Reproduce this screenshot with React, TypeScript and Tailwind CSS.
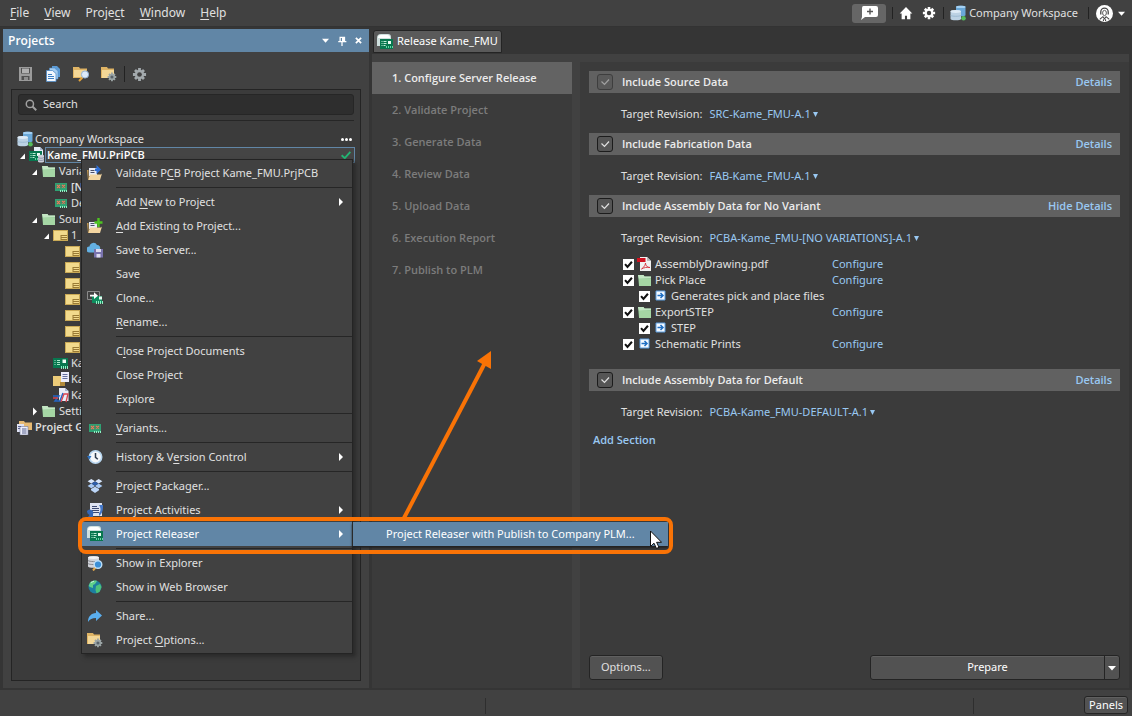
import React from "react";

const FONT = "font-['Noto_Sans','Open_Sans',sans-serif]";
const HEAVY = "font-['Open_Sans','Noto_Sans',sans-serif] font-semibold";

type IconProps = { className?: string };

/* ---------- icons ---------- */

function Svg({ className = "size-4", children }: { className?: string; children: React.ReactNode }) {
  return (
    <svg viewBox="0 0 16 16" className={`shrink-0 ${className}`} aria-hidden="true">
      {children}
    </svg>
  );
}

function CaretDown({ className = "size-2" }: IconProps) {
  return (
    <svg viewBox="0 0 8 8" className={`shrink-0 ${className}`} fill="currentColor" aria-hidden="true">
      <path d="M0 2h8L4 6.500z" />
    </svg>
  );
}

function GearPath({ fill, hole }: { fill: string; hole: string }) {
  return (
    <g>
      <g stroke={fill} strokeWidth="3">
        <path d="M8 1v14M1 8h14" />
        <path d="M3.200 3.200l9.600 9.600M12.800 3.200l-9.600 9.600" />
      </g>
      <circle cx="8" cy="8" r="5" fill={fill} />
      <circle cx="8" cy="8" r="2.500" fill={hole} />
    </g>
  );
}

function WorkspaceIcon({ className }: IconProps) {
  return (
    <Svg className={className}>
      <path d="M6 1.800C6 .4 15.500.4 15.500 1.800v8.400C15.500 11.500 6 11.500 6 10.200z" fill="#6aa8d8" />
      <ellipse cx="10.750" cy="1.900" rx="4.750" ry="1.200" fill="#a4d0f2" />
      <path d="M.5 6.500C.5 4.800 11 4.800 11 6.500V14C11 15.700.5 15.700.5 14z" fill="#bcd2e4" />
      <ellipse cx="5.750" cy="6.500" rx="5.250" ry="1.400" fill="#deebf6" />
      <path d="M.5 10.300c1 1.300 9.500 1.300 10.500 0" stroke="#93b3cc" strokeWidth=".8" fill="none" />
      <circle cx="13.500" cy="13.300" r="2.300" fill="#56bb5c" />
    </Svg>
  );
}

function BoardShape({ x = 0, y = 0 }: { x?: number; y?: number }) {
  return (
    <g transform={`translate(${x} ${y})`}>
      <path d="M0 0h13v10H0z" fill="#08774f" />
      <path d="M1.500 2.500h1M1.500 4.500h1M1.500 6.500h1M3.500 2.500h3M3.500 4.500h3M3.500 6.500h2" stroke="#bfeed8" strokeWidth="1" />
      <path d="M8 2h3v3H8z" fill="#e9fbf2" />
      <path d="M6.500 7v2M8.500 7v2M10.500 7v2M12.500 7v2" stroke="#5fd6a2" strokeWidth="1" />
    </g>
  );
}

function ReleaseIcon({ className }: IconProps) {
  return (
    <Svg className={className}>
      <path d="M0 12V4q0-4 4-4h7q3 0 3 3v2H4v7z" fill="#cfe0de" />
      <path d="M1 4q0-3 3-3h6q3 0 3 2.500V4z" fill="#fff" />
      <BoardShape x={3} y={5} />
    </Svg>
  );
}

function ProjectIcon() {
  return (
    <Svg>
      <path d="M5 0h6l3 3v8H5z" fill="#e8eef8" />
      <path d="M11 0v3h3" fill="#a9b9d4" />
      <BoardShape x={0} y={4} />
      <path d="M9 8.500C9 7.500 15 7.500 15 8.500v6c0 1.300-6 1.300-6 0z" fill="#cdd0da" />
      <path d="M9 10.500c1 1 5 1 6 0M9 12.700c1 1 5 1 6 0" stroke="#80889d" strokeWidth=".8" fill="none" />
    </Svg>
  );
}

function FolderIcon() {
  return (
    <Svg>
      <path d="M1 3h5.500l1 1.500H14V14H2z" fill="#8fc795" />
      <path d="M1 3h5.500l1 1.500H14V6L2 7z" fill="#c4e6c4" />
      <path d="M2 6.500h12V14H2z" fill="#a5d6a4" />
    </Svg>
  );
}

function VariantIcon() {
  return (
    <Svg>
      <path d="M2 4h12v8H2z" fill="#2fa173" />
      <path d="M3.500 5.500h4v4h-4zM8.500 5.500h4v3h-4z" fill="#4c7a5c" />
      <path d="M4 6l3 3m0-3L4 9M9 6l3 2.500m0-2.500L9 8.500" stroke="#e5805f" strokeWidth="1.100" />
      <path d="M7.500 11v2M9.500 11v2M11.500 11v2M13.500 11v2" stroke="#8ff0c4" strokeWidth="1" />
    </Svg>
  );
}

function SheetIcon() {
  return (
    <Svg>
      <path d="M0 3h15v11H0z" fill="#c9a956" />
      <path d="M1 4h13v9H1z" fill="#f2da8c" />
      <path d="M8 8.500h6M8 10.500h6M8 12.500h6M8 8v5" stroke="#9a7b35" strokeWidth="1" fill="none" />
    </Svg>
  );
}

function BoardIcon() {
  return (
    <Svg>
      <path d="M0 3h15v10H0z" fill="#08774f" />
      <path d="M1.500 5.500h1M1.500 7.500h1M1.500 9.500h1M4 5.500h3M4 7.500h3M4 9.500h3" stroke="#a9e8cb" />
      <path d="M9.500 4.500H13V8H9.500z" fill="#effcf5" />
      <path d="M8.500 11v3M10.500 11v3M12.500 11v3M14.500 11v3" stroke="#8ff0c4" strokeWidth="1" />
    </Svg>
  );
}

function SheetDocIcon() {
  return (
    <Svg>
      <path d="M0 5h11v10H0z" fill="#eccb78" />
      <path d="M7 11h5v4H7z" fill="#b08a3b" />
      <path d="M8 1h8v10H8z" fill="#eceefa" />
      <path d="M9.500 3.500h5M9.500 5.500h5M9.500 7.500h5" stroke="#66709c" />
    </Svg>
  );
}

function HarnessIcon() {
  return (
    <Svg>
      <path d="M6 1h6l3.500 3v10H6z" fill="#e8ecf7" />
      <path d="M12 1v3h3.500z" fill="#a9b5d0" />
      <path d="M0 9h6l-4 5h5l3-8" stroke="#2465c4" strokeWidth="1.500" fill="none" />
      <path d="M0 11h5M8 15l3-8h4l-2 8" stroke="#d94450" strokeWidth="1.300" fill="none" />
    </Svg>
  );
}

function ProjectGroupIcon() {
  return (
    <Svg>
      <path d="M2 2h5l1 1.500h7V11H2z" fill="#e6b972" />
      <path d="M0 5h7v8H0z" fill="#dfe2f3" />
      <path d="M3 7.500h8V16H3z" fill="#eceefa" stroke="#737a9f" strokeWidth=".6" />
      <path d="M1 7.500h3M1 9.500h2M5 10h4.500M5 12h4.500M5 14h4.500" stroke="#59628f" />
    </Svg>
  );
}

function ValidateIcon() {
  return (
    <Svg>
      <path d="M2 3h8v8H2z" fill="#e9ecf7" />
      <path d="M3.500 5.500h4M3.500 7.500h4" stroke="#4b4f66" />
      <path d="M8 3.500h1.500V0L14 4.500 9.500 9V6H8z" fill="#2f6fd6" />
      <path d="M1 15l2-5.500h11l1-1-2 6.500z" fill="#f3d5a0" />
      <path d="M0 5h1.500v10H1z" fill="#c89b52" />
    </Svg>
  );
}

function AddExistingIcon() {
  return (
    <Svg>
      <path d="M2 4h8v7H2z" fill="#e9ecf7" />
      <path d="M3.500 5.500h4M3.500 7.500h4" stroke="#4b4f66" />
      <path d="M11.500 0v9M7.500 4.500h8" stroke="#4ec421" strokeWidth="2.400" />
      <path d="M1 15l2-5.500h11l1-1-2 6.500z" fill="#f3d5a0" />
      <path d="M0 5h1.500v10H1z" fill="#c89b52" />
    </Svg>
  );
}

function SaveServerIcon() {
  return (
    <Svg>
      <path d="M2.500 10.500a3 3 0 010-6A4 4 0 0110 3a3 3 0 013 4v3.500z" fill="#63b0e3" />
      <path d="M7 7h9v8.500H7z" fill="#7973ae" />
      <path d="M9 7h5v3H9zM9.500 12h4v3.500h-4z" fill="#dddcf0" />
    </Svg>
  );
}

function CloneIcon() {
  return (
    <Svg>
      <path d="M.5 1.500h12v8H.5z" fill="none" stroke="#8a8a8a" />
      <path d="M5 6h10v7H5z" fill="#0e8d5e" />
      <path d="M3 4.800h4V2.300l4 3.400-4 3.400V6.500H3z" fill="#fff" />
      <path d="M12 6.500h3v3h-3z" fill="#e9fbf2" />
      <path d="M9.500 11v3M11.500 11v3M13.500 11v3M15.500 11v3" stroke="#8ff0c4" strokeWidth="1" />
    </Svg>
  );
}

function HistoryIcon() {
  return (
    <Svg>
      <circle cx="8.500" cy="8" r="6.200" fill="#f6f8fb" stroke="#b7d5ee" strokeWidth="1.600" />
      <path d="M0 7l2.300 3.500L4.500 7z" fill="#2a6fc0" />
      <path d="M8.500 4v4.300l2.300 2" stroke="#2f3c4e" strokeWidth="1.500" fill="none" />
    </Svg>
  );
}

function PackagerIcon() {
  return (
    <Svg>
      <path d="M4.300 1L8 3.300 4.300 5.600.6 3.300zM11.700 1l3.700 2.300-3.700 2.300L8 3.300z" fill="#d7e6fb" />
      <path d="M4.300 5.600L8 7.900l-3.700 2.300L.6 7.900zM11.700 5.600l3.700 2.300-3.700 2.300L8 7.900z" fill="#a9cbf7" />
      <path d="M8 3.500l3.400 2.100L8 7.700 4.600 5.600z" fill="#2d5fae" />
      <path d="M4 11l4-2.300 4 2.300v1.300L8 15l-4-2.700z" fill="#bcd6f8" />
    </Svg>
  );
}

function ActivitiesIcon() {
  return (
    <Svg>
      <path d="M3 1h12v13H3z" fill="#dfe4f2" />
      <path d="M5 4.500h5M5 6.500h7M5 8.500h7M5 10.500h7" stroke="#3d4a73" />
      <path d="M0 9a3.500 3.500 0 016 3.500V15H1l1.500-2A4 4 0 010 9z" fill="#3566b5" />
      <path d="M12 3h4c0 5 0 8-4 11v-3c2-2 2-5 0-8z" fill="#4477c7" />
    </Svg>
  );
}

function ExplorerIcon() {
  return (
    <Svg>
      <path d="M1 2.500C1 .8 12 .8 12 2.500v9c0 1.700-11 1.700-11 0z" fill="#d2d4da" />
      <ellipse cx="6.500" cy="2.600" rx="5.500" ry="1.400" fill="#f2f3f6" />
      <path d="M1 5.500c1.500 1.400 9.500 1.400 11 0M1 8.500c1.500 1.400 9.500 1.400 11 0" stroke="#85888f" fill="none" />
      <path d="M8.500 12.500L6 15.500" stroke="#e0a74e" strokeWidth="2" />
      <circle cx="11" cy="9.500" r="3.800" fill="#3b8fd6" stroke="#bfe0f8" strokeWidth="1.400" />
    </Svg>
  );
}

function GlobeIcon() {
  return (
    <Svg>
      <circle cx="8" cy="8" r="6.500" fill="#1d7fa0" />
      <path d="M3 3.500C5 1.500 9 1 10 2L8 5l-2 1v3l-3-1-1.300-1z" fill="#5fd08a" />
      <path d="M9 7l4-2 1.500 3-2 5-3 1.200L8.500 11z" fill="#4cc27c" />
      <path d="M4 3.500l3-1.300" stroke="#c9f3da" />
    </Svg>
  );
}

function ShareIcon() {
  return (
    <Svg>
      <path d="M1 14C1 8.500 4 5.500 9 5V2l6 5.500L9 13v-3c-4 0-6 1-8 4z" fill="#5aaeee" />
    </Svg>
  );
}

function FolderGearIcon() {
  return (
    <Svg>
      <path d="M0 1h6l1 1.500h6V12H0z" fill="#dfb465" />
      <path d="M1 4h12v8H1z" fill="#f3d797" />
      <g transform="translate(6 6) scale(.62)">
        <GearPath fill="#9ba5a6" hole="#59636b" />
      </g>
    </Svg>
  );
}

function FolderSearchIcon() {
  return (
    <Svg>
      <path d="M0 1h6l1 1.500h7V12H0z" fill="#dfb465" />
      <path d="M1 4h12v7H1z" fill="#f3d797" />
      <path d="M9.500 11.500L6 15" stroke="#e2a33c" strokeWidth="2" />
      <circle cx="12" cy="8.500" r="3.600" fill="#dceafa" stroke="#95b4d6" />
    </Svg>
  );
}

function SaveIcon() {
  return (
    <Svg>
      <path d="M2 1h13v14H2z" fill="#9b9b9b" />
      <path d="M4 2h9v5.500H4zM4.500 10h8v4h-8z" fill="#505050" />
      <path d="M5 2.500h7V7H5z" fill="#b0b0b0" />
      <path d="M7 11h4v3H7z" fill="#8d8d8d" />
    </Svg>
  );
}

function CopyIcon() {
  return (
    <Svg>
      <path d="M7 0h5l3 3v8H7z" fill="#5c9bd5" />
      <path d="M4.500 2h5l3.500 3v8H4.500z" fill="#a5cdf0" stroke="#4e8ac8" strokeWidth=".6" />
      <path d="M1.500 4.500h6l3.500 3v8H1.500z" fill="#f2f7fd" stroke="#4e8ac8" strokeWidth=".8" />
      <path d="M3 8.500h4M3 10.500h6M3 12.500h6" stroke="#3c7fc4" />
    </Svg>
  );
}

function PdfIcon() {
  return (
    <Svg>
      <path d="M3 1h7l4 4v10H3z" fill="#f1f1f1" />
      <path d="M10 1v4h4z" fill="#b9b9b9" />
      <path d="M0 2h8.500v4H0z" fill="#cf1220" />
      <path d="M4.500 13c3-2 4-5 4-6 0 3 2 4.500 4.500 4.500-3-.5-6 0-8.500 1.500z" fill="none" stroke="#d5303b" strokeWidth=".9" />
    </Svg>
  );
}

function OutputIcon() {
  return (
    <Svg>
      <path d="M3 3h9v9H3z" fill="#f4f9ff" stroke="#5a9de0" strokeWidth="1" />
      <path d="M4.500 7.500H10M7.500 5L10 7.500 7.500 10" stroke="#1f6fc4" strokeWidth="1.500" fill="none" />
    </Svg>
  );
}

/* ---------- shared bits ---------- */

// "~" marks the character that is the keyboard mnemonic
function Mnemonic({ text }: { text: string }) {
  const at = text.indexOf("~");
  if (at < 0) return <span>{text}</span>;
  return (
    <span>
      {text.slice(0, at)}
      <u className="underline-offset-2">{text[at + 1]}</u>
      {text.slice(at + 2)}
    </span>
  );
}

function Divider() {
  return <span className="w-px h-3 bg-[#222]" />;
}

/* ---------- top bar ---------- */

const menus = ["~File", "~View", "Proje~ct", "~Window", "~Help"];

function TopBar() {
  return (
    <header className="flex items-center h-[27px] bg-[#414141] border-b border-[#333] text-xs text-[#e0e0e0] pl-[10px] pr-[7px]">
      <nav className="flex gap-[15px]">
        {menus.map((m) => (
          <button key={m} type="button">
            <Mnemonic text={m} />
          </button>
        ))}
      </nav>
      <div className="flex items-center ml-auto text-[11px]">
        <button type="button" aria-label="New comment" className="flex items-center justify-center w-[34px] h-[19px] rounded-[3px] bg-[#666]">
          <svg viewBox="0 0 17 14" className="w-[17px] h-[14px]" aria-hidden="true">
            <path d="M2.500 0H15q2 0 2 2v7q0 2-2 2H4l-4 3 1-3V2Q1 0 2.500 0z" fill="#fff" />
            <path d="M9 2.500v6M6 5.500h6" stroke="#555" strokeWidth="1.400" />
          </svg>
        </button>
        <span className="w-px h-3 ml-1.5 bg-[#222]" />
        <button type="button" aria-label="Home" className="ml-[6px]">
          <Svg className="size-[14px]">
            <path d="M8 1L.8 8.500H3V15h3.800v-4h2.400v4H13V8.500h2.200z" fill="#fff" />
          </Svg>
        </button>
        <button type="button" aria-label="Settings" className="ml-[9px] mr-[7px]">
          <Svg className="size-[14px]">
            <GearPath fill="#fff" hole="#414141" />
          </Svg>
        </button>
        <Divider />
        <button type="button" className="flex items-center gap-[3px] ml-[6px] mr-[10px]">
          <WorkspaceIcon />
          <span>Company Workspace</span>
        </button>
        <Divider />
        <button type="button" aria-label="Account" className="flex items-center gap-[5px] ml-[7px] text-white">
          <Svg className="size-[17px]">
            <circle cx="8" cy="8" r="8" fill="#fff" />
            <path d="M4.500 9V6.500a3.500 3.500 0 017 0V9" fill="none" stroke="#444" strokeWidth="1.200" />
            <ellipse cx="8" cy="7.500" rx="1.800" ry="2.500" fill="none" stroke="#555" strokeWidth=".9" />
            <path d="M3.500 13.500l3-2.500 1.500 2 1.500-2 3 2.500M7 13.500V15M9 13.500V15" stroke="#444" strokeWidth="1" fill="none" />
          </Svg>
          <CaretDown className="size-[7px]" />
        </button>
      </div>
    </header>
  );
}

/* ---------- project tree ---------- */

type Node = {
  depth: 0 | 1 | 2 | 3 | 4;
  icon: React.ReactNode;
  label?: string;
  arrow?: "open" | "closed";
  bold?: boolean;
};

const indent = ["pl-[5px]", "pl-[5px]", "pl-[17px]", "pl-[29px]", "pl-[41px]"];

const tree: Node[] = [
  { depth: 2, icon: <FolderIcon />, label: "Variants", arrow: "open" },
  { depth: 3, icon: <VariantIcon />, label: "[No Variations]", bold: true },
  { depth: 3, icon: <VariantIcon />, label: "Default" },
  { depth: 2, icon: <FolderIcon />, label: "Source", arrow: "open" },
  { depth: 3, icon: <SheetIcon />, label: "1_", arrow: "open" },
  ...Array.from({ length: 7 }, (): Node => ({ depth: 4, icon: <SheetIcon /> })),
  { depth: 3, icon: <BoardIcon />, label: "Kame" },
  { depth: 3, icon: <SheetDocIcon />, label: "Kame" },
  { depth: 3, icon: <HarnessIcon />, label: "Kame" },
  { depth: 2, icon: <FolderIcon />, label: "Settings", arrow: "closed" },
  { depth: 0, icon: <ProjectGroupIcon />, label: "Project Group", bold: true },
];

function TreeArrow({ state }: { state?: "open" | "closed" }) {
  return (
    <svg viewBox="0 0 12 16" className="w-3 h-4 shrink-0" fill="#fff" aria-hidden="true">
      {state === "open" && <path d="M8 6.500v5.500H3z" />}
      {state === "closed" && <path d="M4 4.500L8 8.500l-4 4z" />}
    </svg>
  );
}

function TreeRow({ node }: { node: Node }) {
  return (
    <li className={`flex items-center h-4 ${indent[node.depth]}`}>
      {node.depth > 0 && <TreeArrow state={node.arrow} />}
      {node.icon}
      {node.label && <span className={`ml-0.5 whitespace-nowrap ${node.bold ? HEAVY : ""}`}>{node.label}</span>}
    </li>
  );
}

/* ---------- context menu ---------- */

type MenuEntry = { label: string; icon?: React.ReactNode; sub?: boolean } | "sep";

const entries: MenuEntry[] = [
  { label: "Validate P~CB Project Kame_FMU.PrjPCB", icon: <ValidateIcon /> },
  "sep",
  { label: "Add ~New to Project", sub: true },
  { label: "~Add Existing to Project...", icon: <AddExistingIcon /> },
  { label: "Save to Server...", icon: <SaveServerIcon /> },
  { label: "Save" },
  { label: "Clone...", icon: <CloneIcon /> },
  { label: "~Rename..." },
  "sep",
  { label: "C~lose Project Documents" },
  { label: "Close Project" },
  { label: "Explore" },
  "sep",
  { label: "~Variants...", icon: <VariantIcon /> },
  "sep",
  { label: "History & V~ersion Control", icon: <HistoryIcon />, sub: true },
  "sep",
  { label: "~Project Packager...", icon: <PackagerIcon /> },
  { label: "Project Activities", icon: <ActivitiesIcon />, sub: true },
  { label: "Project Releaser", icon: <ReleaseIcon />, sub: true },
  "sep",
  { label: "Show in Explorer", icon: <ExplorerIcon /> },
  { label: "Show in Web Browser", icon: <GlobeIcon /> },
  "sep",
  { label: "Share...", icon: <ShareIcon /> },
  { label: "Project ~Options...", icon: <FolderGearIcon /> },
];

// Submenu, the orange callout round it, the arrow and the pointer
function ReleaserSubmenu() {
  return (
    <>
      <div className="absolute left-full top-0 w-[316px] bg-[#6186a6] border-l border-[#2a2a2a] shadow-[0_2px_2px_#222]">
        <button type="button" className="flex items-center w-full h-6 pl-[33px] whitespace-nowrap">
          Project Releaser with Publish to Company PLM...
        </button>
      </div>
      <div className="absolute -left-1 -top-[5px] w-[595px] h-[37px] border-4 border-[#f97306] rounded-lg pointer-events-none" />
      <svg viewBox="0 0 96 168" className="absolute left-[318px] bottom-full mb-1 w-24 h-[168px] pointer-events-none" aria-hidden="true">
        <path d="M4 168L87 9" stroke="#f97306" strokeWidth="4" />
        <path d="M91 1v18L77 11z" fill="#f97306" />
      </svg>
      <svg viewBox="0 0 12 19" className="absolute left-[568px] top-2 w-3 h-[19px] pointer-events-none" aria-hidden="true">
        <path d="M.5 1v15.500l3.500-3.300 2.500 5.300 2.500-1.200-2.400-5h5z" fill="#fff" stroke="#111" />
      </svg>
    </>
  );
}

function ContextMenu() {
  return (
    <ul className="absolute left-[78px] top-[130px] z-10 w-[272px] py-px bg-[#414141] border border-[#242424] shadow-[3px_3px_4px_#2a2a2a]">
      {entries.map((entry, i) => {
        if (entry === "sep") {
          return <li key={i} className="h-[5px] pl-[34px] pt-0.5"><div className="h-px bg-[#262626]" /></li>;
        }
        const active = entry.label === "Project Releaser";
        return (
          <li key={i} className={active ? "relative bg-[#6186a6] text-white" : ""}>
            <button type="button" className="flex items-center w-full h-6 pl-[5px] pr-[9px] gap-[13px] whitespace-nowrap">
              <span className="size-4 shrink-0">{entry.icon}</span>
              <Mnemonic text={entry.label} />
              {entry.sub && (
                <svg viewBox="0 0 4 8" className="w-1 h-2 ml-auto" fill="#fff" aria-hidden="true">
                  <path d="M0 0l4 4-4 4z" />
                </svg>
              )}
            </button>
            {active && <ReleaserSubmenu />}
          </li>
        );
      })}
    </ul>
  );
}

/* ---------- left panel ---------- */

function ProjectsPanel() {
  return (
    <aside className="relative flex flex-col w-[366px] shrink-0 bg-[#414141] text-[11px] text-[#e0e0e0]">
      <div className="flex items-center h-[23px] pl-[5px] pr-[7px] bg-[#6186a6] text-white">
        <h2 className={`text-xs ${HEAVY}`}>Projects</h2>
        <div className="flex items-center gap-2 ml-auto">
          <button type="button" aria-label="Panel menu"><CaretDown className="size-[7px]" /></button>
          <button type="button" aria-label="Pin panel">
            <Svg className="size-[10px]">
              <path d="M4 1h9v7h2v2H9v6H7v-6H2V8h2z" fill="#fff" />
              <path d="M6 3h2v5H6z" fill="#6186a6" />
            </Svg>
          </button>
          <button type="button" aria-label="Close panel">
            <svg viewBox="0 0 8 8" className="size-[7px]" aria-hidden="true">
              <path d="M1 1l6 6M7 1L1 7" stroke="#fff" strokeWidth="2" />
            </svg>
          </button>
        </div>
      </div>

      <div className="flex items-center h-[37px] pt-[7px] pl-[14px]">
        <button type="button" aria-label="Save"><SaveIcon /></button>
        <button type="button" aria-label="Copy" className="ml-3"><CopyIcon /></button>
        <button type="button" aria-label="Find in folder" className="ml-3"><FolderSearchIcon /></button>
        <button type="button" aria-label="Folder options" className="ml-3"><FolderGearIcon /></button>
        <span className="w-px h-4 mx-[7px] bg-[#222]" />
        <button type="button" aria-label="Settings" className="flex">
          <Svg className="size-[15px]"><GearPath fill="#a3aaad" hole="#414141" /></Svg>
        </button>
      </div>

      <div className="flex flex-col flex-1 mx-2 mb-[7px] border border-[#242424] bg-[#3b3b3b]">
        <div className="mx-1.5 mt-1 pb-[5px] border-b border-[#262626]">
          <label className="flex items-center h-[21px] gap-1.5 pl-1.5 rounded-[3px] border border-[#262626] bg-[#2e2e2e]">
            <Svg className="size-3">
              <circle cx="6.500" cy="6.500" r="4.800" fill="none" stroke="#a0a0a0" strokeWidth="2" />
              <path d="M10 10l5 5" stroke="#a0a0a0" strokeWidth="2.500" />
            </Svg>
            <input type="text" aria-label="Search" placeholder="Search" className="flex-1 min-w-0 bg-transparent outline-none placeholder:text-[#e0e0e0]" />
          </label>
        </div>

        <ul className="mt-2.5">
          <li className="flex items-center h-4 pl-[5px] pr-2">
            <WorkspaceIcon />
            <span className="ml-0.5">Company Workspace</span>
            <button type="button" aria-label="More" className="flex gap-px ml-auto">
              <span className="size-[3px] rounded-full bg-white" />
              <span className="size-[3px] rounded-full bg-white" />
              <span className="size-[3px] rounded-full bg-white" />
            </button>
          </li>
          <li className="flex items-center h-4 pl-[5px] pr-[5px]">
            <TreeArrow state="open" />
            <ProjectIcon />
            <div className="flex flex-1 items-center h-4 pl-px pr-[3px] border border-[#6186a6] bg-[#454545]">
              <span className={`text-white ${HEAVY}`}>Kame_FMU.PrjPCB</span>
              <Svg className="size-[10px] ml-auto">
                <path d="M1 8.500l5 4.500L15 3" stroke="#22b573" strokeWidth="3" fill="none" />
              </Svg>
            </div>
          </li>
          {tree.map((node, i) => (
            <TreeRow key={i} node={node} />
          ))}
        </ul>
      </div>

      <ContextMenu />
    </aside>
  );
}

/* ---------- release view ---------- */

const steps = [
  "1. Configure Server Release",
  "2. Validate Project",
  "3. Generate Data",
  "4. Review Data",
  "5. Upload Data",
  "6. Execution Report",
  "7. Publish to PLM",
];

function Steps() {
  return (
    <ol className={`w-[200px] shrink-0 bg-[#3b3b3b] ${HEAVY}`}>
      {steps.map((step, i) => (
        <li key={step}>
          <button
            type="button"
            className={`w-full h-8 pl-5 text-left ${i === 0 ? "bg-[#636363] text-[#ececec]" : "text-[#7c7c7c]"}`}
          >
            {step}
          </button>
        </li>
      ))}
    </ol>
  );
}

function SectionCheck({ label, muted }: { label: string; muted?: boolean }) {
  return (
    <label className={`flex items-center gap-[9px] text-[#ececec] ${HEAVY}`}>
      <span className={`grid ${muted ? "opacity-50" : ""}`}>
        <input
          type="checkbox"
          defaultChecked
          disabled={muted}
          className="appearance-none col-start-1 row-start-1 size-4 rounded-[3px] border border-[#1c1c1c] bg-[#555]"
        />
        <Svg className="col-start-1 row-start-1 size-4 pointer-events-none">
          <path d="M4.500 7.500L7.500 10.500l4.500-5" stroke="#e0e0e0" strokeWidth="1.200" fill="none" />
        </Svg>
      </span>
      {label}
    </label>
  );
}

function ItemCheck({ label, icon }: { label: string; icon: React.ReactNode }) {
  return (
    <label className="flex items-center">
      <span className="grid mr-[3px]">
        <input type="checkbox" defaultChecked className="appearance-none col-start-1 row-start-1 size-[11px] bg-white" />
        <Svg className="col-start-1 row-start-1 size-[11px] pointer-events-none">
          <path d="M3 7.500l3.500 4L13 4" stroke="#111" strokeWidth="3" fill="none" />
        </Svg>
      </span>
      {icon}
      <span className="ml-0.5">{label}</span>
    </label>
  );
}

type SectionProps = {
  title: string;
  revision: string;
  link?: string;
  muted?: boolean;
  children?: React.ReactNode;
};

function Section({ title, revision, link = "Details", muted, children }: SectionProps) {
  return (
    <section>
      <div className="flex items-center justify-between h-[22px] px-2 bg-[#616161]">
        <SectionCheck label={title} muted={muted} />
        <button type="button" className={`text-[#99c8f2] ${HEAVY}`}>{link}</button>
      </div>
      <label className="flex items-center h-4 mt-[13px] ml-8">
        Target Revision:
        <select className="appearance-none ml-[7px] mr-0.5 text-[#99c8f2]">
          <option>{revision}</option>
        </select>
        <svg viewBox="0 0 5 5" className="size-[5px] shrink-0" fill="#99c8f2" aria-hidden="true">
          <path d="M0 0h5L2.500 5z" />
        </svg>
      </label>
      {children}
    </section>
  );
}

const outputs = [
  { label: "AssemblyDrawing.pdf", icon: <PdfIcon />, configure: true },
  { label: "Pick Place", icon: <FolderIcon />, configure: true },
  { label: "Generates pick and place files", icon: <OutputIcon />, child: true },
  { label: "ExportSTEP", icon: <FolderIcon />, configure: true },
  { label: "STEP", icon: <OutputIcon />, child: true },
  { label: "Schematic Prints", icon: <OutputIcon />, configure: true },
];

function OutputList() {
  return (
    <ul className="mt-2.5 mb-1.5 ml-[34px]">
      {outputs.map((o) => (
        <li key={o.label} className={`flex items-center h-4 ${o.child ? "pl-4" : ""}`}>
          <div className={o.child ? "" : "w-[209px]"}>
            <ItemCheck label={o.label} icon={o.icon} />
          </div>
          {o.configure && <button type="button" className="text-[#99c8f2]">Configure</button>}
        </li>
      ))}
    </ul>
  );
}

const buttonLook = "border border-[#242424] bg-[#525252] shadow-[inset_0_1px_0_#606060]";

function ReleaseView() {
  return (
    <main className="flex flex-col flex-1 min-w-0 text-[11px] text-[#e0e0e0]">
      <div className="flex h-[25px] pt-px pl-px">
        <button type="button" className="flex items-center gap-1 h-[23px] px-[3px] rounded-t-[3px] border border-[#242424] bg-[#5a5a5a] text-white">
          <ReleaseIcon />
          Release Kame_FMU
        </button>
      </div>
      <div className="flex flex-1 gap-2 pt-2 bg-[#414141]">
        <Steps />
        <div className="flex flex-col flex-1 min-w-0 px-[9px] pt-[9px] pb-2 bg-[#3b3b3b]">
          <div className="flex flex-col gap-[11px]">
            <Section title="Include Source Data" revision="SRC-Kame_FMU-A.1" muted />
            <Section title="Include Fabrication Data" revision="FAB-Kame_FMU-A.1" />
            <Section title="Include Assembly Data for No Variant" revision="PCBA-Kame_FMU-[NO VARIATIONS]-A.1" link="Hide Details">
              <OutputList />
            </Section>
            <Section title="Include Assembly Data for Default" revision="PCBA-Kame_FMU-DEFAULT-A.1" />
            <button type="button" className={`self-start h-[18px] ml-1 text-[#99c8f2] ${HEAVY}`}>Add Section</button>
          </div>
          <div className="flex justify-between mt-auto">
            <button type="button" className={`h-[25px] px-[11px] rounded-[3px] ${buttonLook}`}>Options...</button>
            <div className={`flex w-[250px] h-[25px] rounded-[3px] text-white ${buttonLook}`}>
              <button type="button" className="flex-1">Prepare</button>
              <button type="button" aria-label="More prepare options" className="flex items-center justify-center w-[15px] border-l border-[#242424]">
                <CaretDown />
              </button>
            </div>
          </div>
        </div>
      </div>
    </main>
  );
}

export default function App() {
  return (
    <div className={`flex flex-col min-h-screen bg-[#353535] ${FONT}`}>
      <TopBar />
      <div className="flex flex-1 gap-[3px] pt-0.5 pl-[3px] pr-[3px] pb-0.5">
        <ProjectsPanel />
        <ReleaseView />
      </div>
      <footer className="flex items-end h-[26px] pr-1 pb-0.5 bg-[#414141] text-[11px] text-white">
        <span className="w-[486px] h-4 border-r border-[#2e2e2e]" />
        <span className="h-4 ml-auto mr-[110px] border-l border-[#2e2e2e]" />
        <button type="button" className={`h-[18px] px-1 rounded-[3px] ${buttonLook}`}>Panels</button>
      </footer>
    </div>
  );
}
